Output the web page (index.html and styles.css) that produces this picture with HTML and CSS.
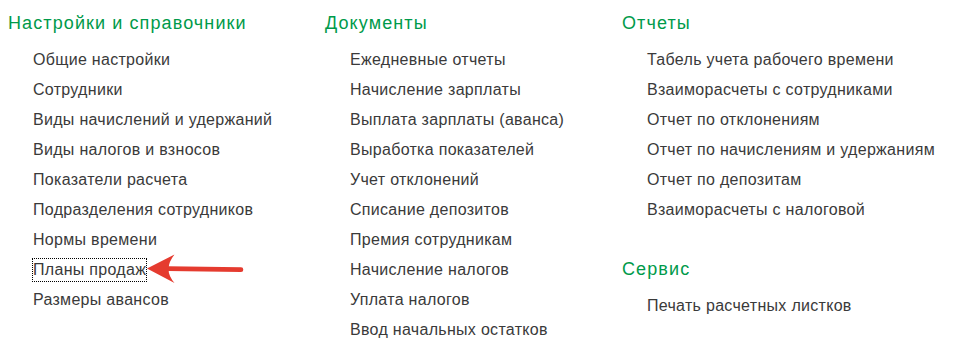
FILE: index.html
```html
<!DOCTYPE html>
<html lang="ru">
<head>
<meta charset="utf-8">
<title>Зарплата</title>
<link rel="stylesheet" href="styles.css">
</head>
<body>
<div class="page">
  <div class="col col-1">
    <section class="group">
      <h2 class="group-title">Настройки и справочники</h2>
      <ul class="links">
        <li><a class="link">Общие настройки</a></li>
        <li><a class="link">Сотрудники</a></li>
        <li><a class="link">Виды начислений и удержаний</a></li>
        <li><a class="link">Виды налогов и взносов</a></li>
        <li><a class="link">Показатели расчета</a></li>
        <li><a class="link">Подразделения сотрудников</a></li>
        <li><a class="link">Нормы времени</a></li>
        <li><a class="link link-focus">Планы продаж</a></li>
        <li><a class="link">Размеры авансов</a></li>
      </ul>
    </section>
  </div>
  <div class="col col-2">
    <section class="group">
      <h2 class="group-title">Документы</h2>
      <ul class="links">
        <li><a class="link">Ежедневные отчеты</a></li>
        <li><a class="link">Начисление зарплаты</a></li>
        <li><a class="link">Выплата зарплаты (аванса)</a></li>
        <li><a class="link">Выработка показателей</a></li>
        <li><a class="link">Учет отклонений</a></li>
        <li><a class="link">Списание депозитов</a></li>
        <li><a class="link">Премия сотрудникам</a></li>
        <li><a class="link">Начисление налогов</a></li>
        <li><a class="link">Уплата налогов</a></li>
        <li><a class="link">Ввод начальных остатков</a></li>
      </ul>
    </section>
  </div>
  <div class="col col-3">
    <section class="group">
      <h2 class="group-title">Отчеты</h2>
      <ul class="links">
        <li><a class="link">Табель учета рабочего времени</a></li>
        <li><a class="link">Взаиморасчеты с сотрудниками</a></li>
        <li><a class="link">Отчет по отклонениям</a></li>
        <li><a class="link">Отчет по начислениям и удержаниям</a></li>
        <li><a class="link">Отчет по депозитам</a></li>
        <li><a class="link">Взаиморасчеты с налоговой</a></li>
      </ul>
    </section>
    <section class="group">
      <h2 class="group-title">Сервис</h2>
      <ul class="links">
        <li><a class="link">Печать расчетных листков</a></li>
      </ul>
    </section>
  </div>
  <svg class="pointer" width="953" height="350" viewBox="0 0 953 350" aria-hidden="true">
    <line x1="168" y1="268.6" x2="241" y2="269.6" stroke="#e53b2f" stroke-width="4.6" stroke-linecap="round"/>
    <path d="M147 268.5 L174.5 254.5 Q168.5 262 168.5 269 Q168.5 276 174.5 283 Z" fill="#e53b2f"/>
  </svg>
</div>
</body>
</html>
```
FILE: styles.css
```css
html, body {
  margin: 0;
  padding: 0;
  background: #ffffff;
}

body {
  font-family: "Liberation Sans", Arial, sans-serif;
  color: #3a3a3a;
}

.page {
  position: relative;
  width: 953px;
  height: 350px;
  box-sizing: border-box;
  padding: 11px 0 0 8px;
  display: grid;
  grid-template-columns: 317px 297px 1fr;
  align-items: start;
}

.col {
  display: flex;
  flex-direction: column;
  gap: 35px;
}

.group-title {
  margin: 0;
  font-size: 18px;
  line-height: 24px;
  font-weight: normal;
  letter-spacing: 1.1px;
  color: #009a4a;
}

.links {
  list-style: none;
  margin: 13px 0 0 0;
  padding: 0 0 0 24px;
  display: flex;
  flex-direction: column;
  gap: 6px;
}

.links li {
  display: flex;
}

.link {
  display: block;
  font-size: 16px;
  line-height: 22px;
  letter-spacing: 0.3px;
  border: 1px dotted transparent;
  padding: 0;
  color: #3a3a3a;
  white-space: nowrap;
  cursor: pointer;
}

.link-focus {
  border-color: #000000;
}

.pointer {
  position: absolute;
  left: 0;
  top: 0;
  pointer-events: none;
}
```
